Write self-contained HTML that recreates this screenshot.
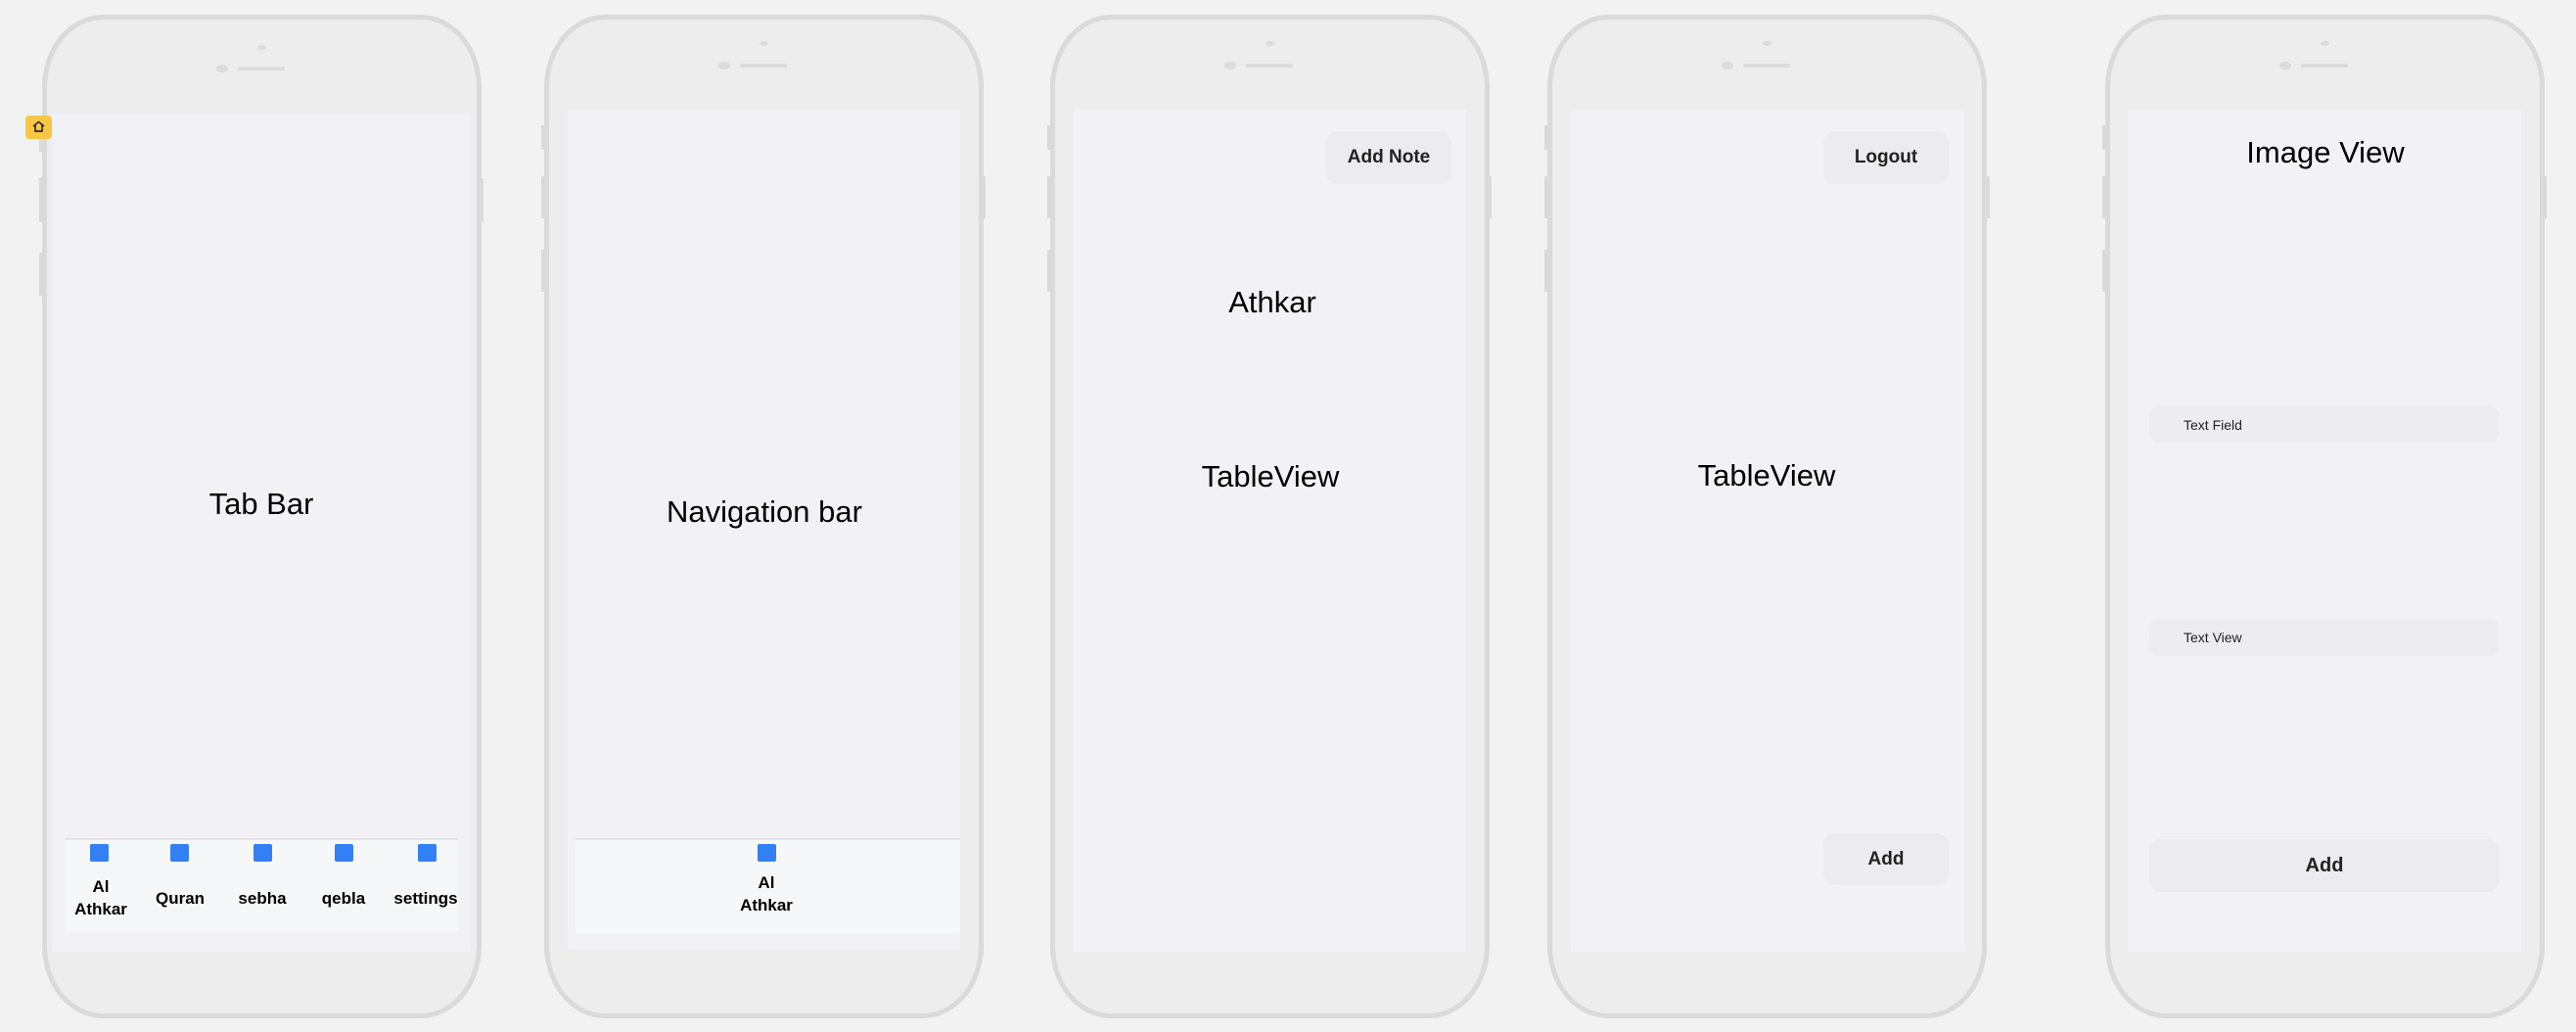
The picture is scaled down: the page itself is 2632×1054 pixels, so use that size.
<!DOCTYPE html>
<html><head><meta charset="utf-8"><style>
*{margin:0;padding:0;box-sizing:border-box}
body{width:2632px;height:1054px;background:#f2f2f2;position:relative;overflow:hidden;font-family:"Liberation Sans",sans-serif;color:#000}
.ph{position:absolute;top:15px;width:449px;height:1025px;background:#ededed;border:5px solid #dadada;border-radius:62px/74px}
.sb{position:absolute;background:#dadada;width:4px}
.cam{position:absolute;width:9px;height:5px;border-radius:50%;background:#dcdcdc}
.dot{position:absolute;width:12px;height:8px;border-radius:50%;background:#dcdcdc}
.spk{position:absolute;width:48px;height:4px;border-radius:2px;background:#dcdcdc}
.scr{position:absolute;background:#f2f2f6}
.t{position:absolute;font-size:31px;transform:translate(-50%,-50%);white-space:nowrap}
.btn{position:absolute;background:#ebebf0;border-radius:12px;display:flex;align-items:center;justify-content:center;font-weight:bold;font-size:19px;color:#222}
.tab{position:absolute;background:#f6f7f9;border-top:2px solid #e3e3e8}
.ic{position:absolute;width:19px;height:18px;background:#3380f5;border-radius:2px}
.lb{position:absolute;font-weight:bold;font-size:17px;line-height:23px;text-align:center;transform:translateX(-50%);white-space:nowrap}
.fld{position:absolute;background:#ececf1;border-radius:10px;font-size:14px;color:#222;padding-left:35px;display:flex;align-items:center}
</style></head><body>

<!-- phone 1 -->
<div class="sb" style="left:40px;top:130px;height:25px"></div>
<div class="sb" style="left:40px;top:181px;height:46px"></div>
<div class="sb" style="left:40px;top:258px;height:44px"></div>
<div class="sb" style="left:490px;top:182px;height:45px"></div>
<div class="ph" style="left:43px"></div>
<div class="cam" style="left:263px;top:46px"></div>
<div class="dot" style="left:221px;top:66px"></div>
<div class="spk" style="left:243px;top:68px"></div>
<div class="scr" style="left:53px;top:116px;width:428px;height:856px"></div>
<div class="t" style="left:267px;top:515px">Tab Bar</div>
<div class="tab" style="left:67px;top:856px;width:401px;height:95px"></div>
<div class="ic" style="left:92px;top:862px"></div>
<div class="ic" style="left:174px;top:862px"></div>
<div class="ic" style="left:259px;top:862px"></div>
<div class="ic" style="left:342px;top:862px"></div>
<div class="ic" style="left:427px;top:862px"></div>
<div class="lb" style="left:103px;top:894px">Al<br>Athkar</div>
<div class="lb" style="left:184px;top:906px">Quran</div>
<div class="lb" style="left:268px;top:906px">sebha</div>
<div class="lb" style="left:351px;top:906px">qebla</div>
<div class="lb" style="left:435px;top:906px">settings</div>
<div style="position:absolute;left:26px;top:118px;width:27px;height:24px;background:#f7c744;border-radius:4px"><svg width="27" height="24" viewBox="0 0 27 24"><path d="M8 11 L13.5 6.5 L19 11 M10 10 V16 H17 V10" fill="none" stroke="#111" stroke-width="1.4"/></svg></div>

<!-- phone 2 -->
<div class="sb" style="left:553px;top:128px;height:25px"></div>
<div class="sb" style="left:553px;top:180px;height:43px"></div>
<div class="sb" style="left:553px;top:255px;height:43px"></div>
<div class="sb" style="left:1003px;top:180px;height:43px"></div>
<div class="ph" style="left:556px"></div>
<div class="cam" style="left:776px;top:42px"></div>
<div class="dot" style="left:734px;top:63px"></div>
<div class="spk" style="left:756px;top:65px"></div>
<div class="scr" style="left:580px;top:113px;width:401px;height:857px"></div>
<div class="t" style="left:781px;top:523px">Navigation bar</div>
<div class="tab" style="left:588px;top:856px;width:393px;height:97px"></div>
<div class="ic" style="left:774px;top:862px"></div>
<div class="lb" style="left:783px;top:890px">Al<br>Athkar</div>

<!-- phone 3 -->
<div class="sb" style="left:1070px;top:128px;height:25px"></div>
<div class="sb" style="left:1070px;top:180px;height:43px"></div>
<div class="sb" style="left:1070px;top:255px;height:43px"></div>
<div class="sb" style="left:1520px;top:180px;height:43px"></div>
<div class="ph" style="left:1073px"></div>
<div class="cam" style="left:1293px;top:42px"></div>
<div class="dot" style="left:1251px;top:63px"></div>
<div class="spk" style="left:1273px;top:65px"></div>
<div class="scr" style="left:1097px;top:113px;width:401px;height:859px"></div>
<div class="btn" style="left:1355px;top:134px;width:128px;height:54px">Add Note</div>
<div class="t" style="left:1300px;top:309px">Athkar</div>
<div class="t" style="left:1298px;top:487px">TableView</div>

<!-- phone 4 -->
<div class="sb" style="left:1578px;top:128px;height:25px"></div>
<div class="sb" style="left:1578px;top:180px;height:43px"></div>
<div class="sb" style="left:1578px;top:255px;height:43px"></div>
<div class="sb" style="left:2029px;top:180px;height:43px"></div>
<div class="ph" style="left:1581px"></div>
<div class="cam" style="left:1801px;top:42px"></div>
<div class="dot" style="left:1759px;top:63px"></div>
<div class="spk" style="left:1781px;top:65px"></div>
<div class="scr" style="left:1605px;top:113px;width:402px;height:859px"></div>
<div class="btn" style="left:1863px;top:134px;width:128px;height:54px">Logout</div>
<div class="t" style="left:1805px;top:486px">TableView</div>
<div class="btn" style="left:1863px;top:851px;width:128px;height:53px">Add</div>

<!-- phone 5 -->
<div class="sb" style="left:2148px;top:128px;height:25px"></div>
<div class="sb" style="left:2148px;top:180px;height:43px"></div>
<div class="sb" style="left:2148px;top:255px;height:43px"></div>
<div class="sb" style="left:2598px;top:180px;height:43px"></div>
<div class="ph" style="left:2151px"></div>
<div class="cam" style="left:2371px;top:42px"></div>
<div class="dot" style="left:2329px;top:63px"></div>
<div class="spk" style="left:2351px;top:65px"></div>
<div class="scr" style="left:2174px;top:113px;width:402px;height:859px"></div>
<div class="t" style="left:2376px;top:156px">Image View</div>
<div class="fld" style="left:2196px;top:415px;width:358px;height:37px">Text Field</div>
<div class="fld" style="left:2196px;top:632px;width:358px;height:38px">Text View</div>
<div class="btn" style="left:2196px;top:857px;width:358px;height:54px;font-size:20px">Add</div>
</body></html>
